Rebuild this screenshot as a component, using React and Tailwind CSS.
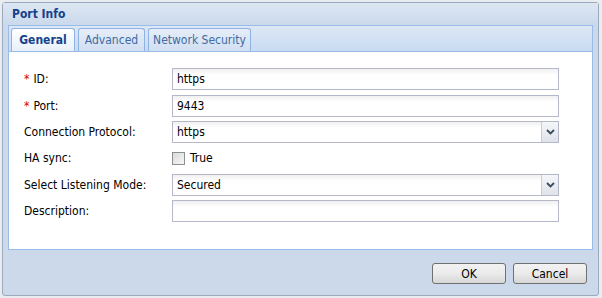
import React from 'react';

const Chevron = () => (
  <svg width="9" height="6" viewBox="0 0 9 6">
    <path d="M1 1 L4.5 4.5 L8 1" fill="none" stroke="#3b4a5c" strokeWidth="1.8" />
  </svg>
);

const TextField = ({ value }) => (
  <div className="h-[22px] w-[387px] border border-[#b5b8c8] bg-white bg-gradient-to-b from-[#f0f0f0] to-white to-[30%] px-[4px] text-[12px] leading-[20px] text-black">
    {value}
  </div>
);

const ComboField = ({ value }) => (
  <div className="flex h-[22px] w-[387px] border border-[#b5b8c8] bg-white">
    <div className="flex-1 bg-gradient-to-b from-[#f0f0f0] to-white to-[30%] px-[4px] text-[12px] leading-[20px] text-black">{value}</div>
    <div className="flex w-[17px] items-center justify-center border-l border-[#c8ccd6] bg-gradient-to-b from-[#f4f6f9] to-[#dfe3ea]">
      <Chevron />
    </div>
  </div>
);

const Row = ({ label, required, children, h = 'h-[26px]' }) => (
  <div className={`flex items-center ${h}`}>
    <div className="w-[148px] text-[12px] text-black">
      {required && <span className="mr-[4px] text-[#cc0000]">*</span>}
      {label}
    </div>
    {children}
  </div>
);

const Button = ({ children }) => (
  <button className="h-[21px] w-[74px] rounded-[3px] border border-[#707070] bg-gradient-to-b from-[#f2f2f2] via-[#ebebeb] to-[#d6d6d6] text-[12px] text-black">
    {children}
  </button>
);

export default function App() {
  return (
    <div className="h-[298px] w-[602px] bg-[#e9edf2] p-[2px] font-['DejaVu_Sans_Condensed','DejaVu_Sans',sans-serif]">
      <div className="flex h-[294px] w-[597px] flex-col rounded-[3px] border border-[#9aa9bc] bg-[#cbd9eb]">
        <div className="flex h-[22px] items-center bg-gradient-to-b from-[#dde7f3] to-[#cbd9ec] pl-[9px] text-[12px] font-bold text-[#15428b]">
          Port Info
        </div>
        <div className="mx-[5px] flex flex-1 flex-col">
          <div className="flex h-[26px] items-end gap-[3px] border border-b-0 border-[#99bbe8] bg-gradient-to-b from-[#dde8f5] to-[#c9dbf1] pl-[2px]">
            <div className="flex h-[23px] w-[64px] items-center justify-center rounded-t-[3px] border border-b-0 border-[#8db2e3] bg-gradient-to-b from-white to-[#e8f0fa] text-[12px] font-bold text-[#15428b]">
              General
            </div>
            <div className="flex h-[23px] w-[67px] items-center justify-center rounded-t-[3px] border border-b-0 border-[#8db2e3] bg-gradient-to-b from-[#e6eef8] to-[#d0dff2] text-[12px] text-[#416aa3]">
              Advanced
            </div>
            <div className="flex h-[23px] w-[103px] items-center justify-center rounded-t-[3px] border border-b-0 border-[#8db2e3] bg-gradient-to-b from-[#e6eef8] to-[#d0dff2] text-[12px] text-[#416aa3]">
              Network Security
            </div>
          </div>
          <div className="h-[199px] border border-[#99bbe8] bg-white pl-[15px] pt-[13px]">
            <Row label="ID:" required h="h-[28px]"><TextField value="https" /></Row>
            <Row label="Port:" required><TextField value="9443" /></Row>
            <Row label="Connection Protocol:"><ComboField value="https" /></Row>
            <Row label="HA sync:">
              <div className="flex items-center gap-[5px] text-[12px] text-black">
                <div className="h-[13px] w-[13px] border border-[#8e8f8f] bg-gradient-to-br from-[#dcdcdc] to-[#f6f6f6]" />
                True
              </div>
            </Row>
            <Row label="Select Listening Mode:" h="h-[27px]"><ComboField value="Secured" /></Row>
            <Row label="Description:"><TextField value="" /></Row>
          </div>
          <div className="flex flex-1 items-center justify-end gap-[7px] pr-[6px] pt-[2px]">
            <Button>OK</Button>
            <Button>Cancel</Button>
          </div>
        </div>
      </div>
    </div>
  );
}
